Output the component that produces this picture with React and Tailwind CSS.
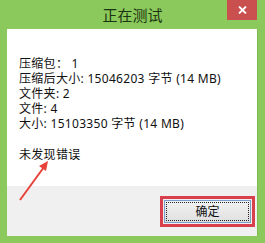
import React from "react";

const font = { fontFamily: '"Segoe UI", "Noto Sans", "Noto Sans CJK SC", sans-serif' };

const lines = [
  "压缩包： 1",
  "压缩后大小: 15046203 字节 (14 MB)",
  "文件夹: 2",
  "文件: 4",
  "大小: 15103350 字节 (14 MB)",
];

export default function App() {
  return (
    <div className="relative w-[265px] h-[243px] bg-[#8bc95c] flex flex-col overflow-hidden" style={font}>
      <div className="h-[29px] flex items-center justify-center relative">
        <span className="text-[15px] text-[#1c3510] mt-[1px]">正在测试</span>
        <div className="absolute right-[8px] top-0 w-[30px] h-[20px] bg-[#c9504f] flex items-center justify-center">
          <svg width="9" height="8" viewBox="0 0 9 8">
            <path d="M1 0.5 L8 7.5 M8 0.5 L1 7.5" stroke="#fff" strokeWidth="1.8" />
          </svg>
        </div>
      </div>
      <div className="mx-[7px] mb-[7px] flex-1 flex flex-col border-r border-[#7dbb4f] bg-white">
        <div className="flex-1 pl-[12px] pt-[27px] text-[12px] leading-[15px] tracking-[0.3px] text-[#111]">
          {lines.map((l) => (
            <div key={l} className="h-[15px] whitespace-nowrap">{l}</div>
          ))}
          <div className="mt-[16px] h-[15px]">未发现错误</div>
        </div>
        <div className="h-[50px] bg-[#f0f0f0] flex justify-end items-start pt-[10px] pr-[2px]">
          <div className="w-[95px] h-[31px] border-[3px] border-[#d8404d] p-[1px]">
            <div className="w-full h-full border border-[#7a9cc8] bg-gradient-to-b from-[#f2f2f2] to-[#e0e0e0] p-[1px]">
              <div className="w-full h-full border border-dotted border-[#222] flex items-center justify-center text-[12px] text-[#111]">
                确定
              </div>
            </div>
          </div>
        </div>
      </div>
      <svg className="absolute left-0 top-0 pointer-events-none" width="265" height="243">
        <line x1="20" y1="200" x2="44" y2="167" stroke="#e8433a" strokeWidth="2" />
        <polygon points="48,161 39,166 46,171" fill="#e8433a" />
      </svg>
    </div>
  );
}
